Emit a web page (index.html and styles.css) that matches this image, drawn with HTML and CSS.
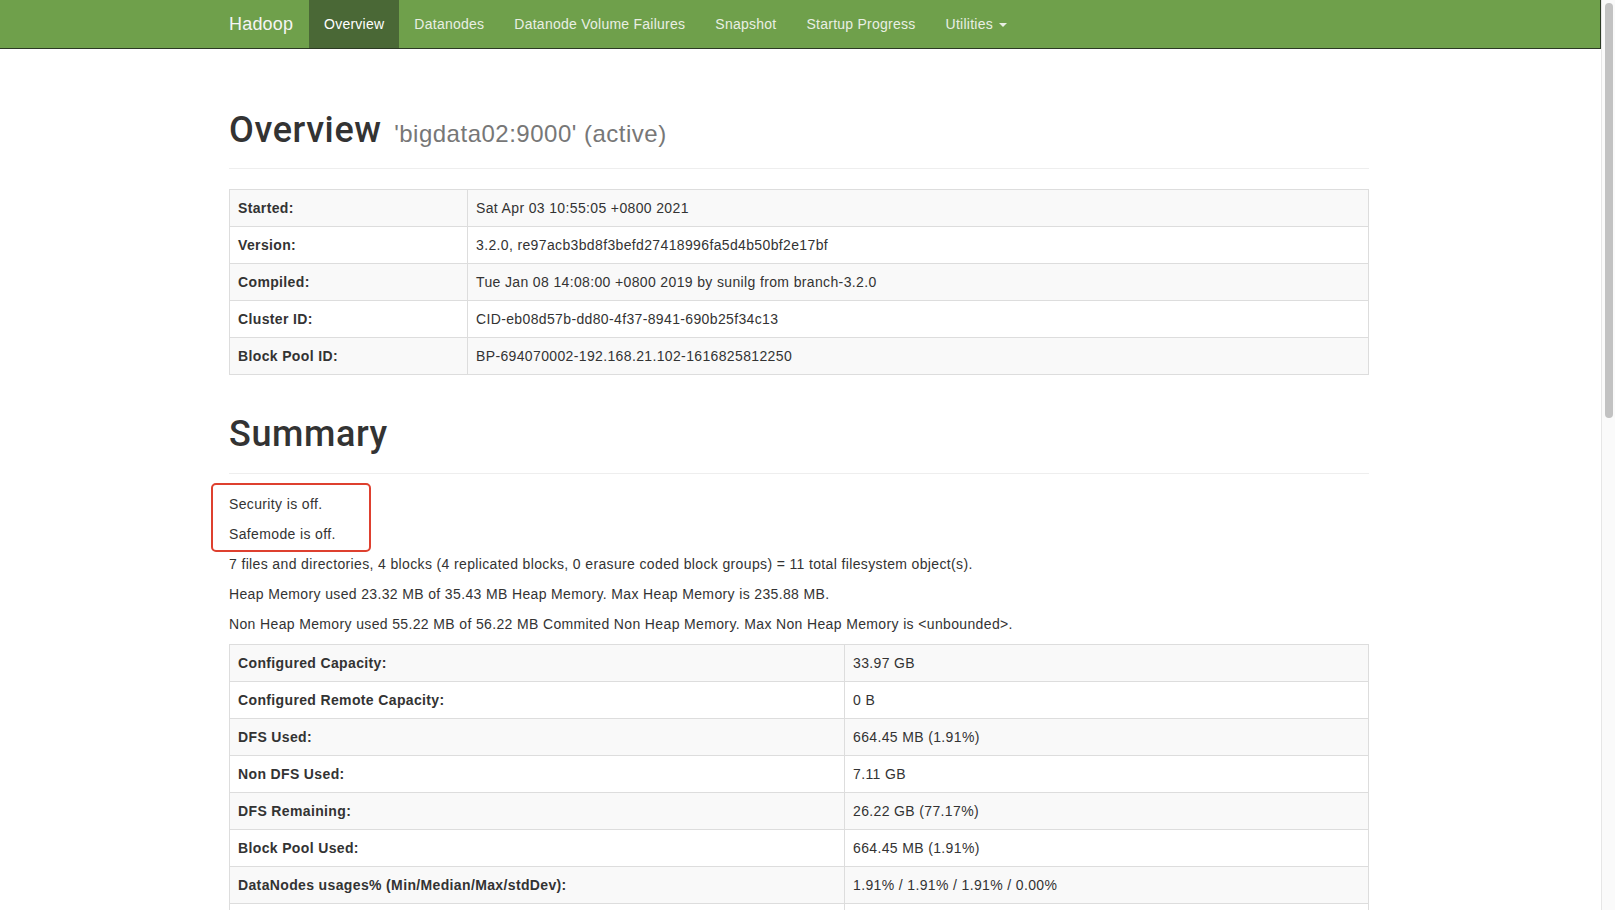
FILE: index.html
```html
<!DOCTYPE html>
<html lang="en">
<head>
<meta charset="utf-8">
<title>Namenode information</title>
<link rel="stylesheet" href="styles.css">
</head>
<body>
<div class="app">
  <div class="page">
    <nav class="navbar">
      <div class="nav-inner">
        <a class="brand" href="#">Hadoop</a>
        <ul class="nav">
          <li class="active"><a href="#">Overview</a></li>
          <li><a href="#">Datanodes</a></li>
          <li><a href="#">Datanode Volume Failures</a></li>
          <li><a href="#">Snapshot</a></li>
          <li><a href="#">Startup Progress</a></li>
          <li><a href="#">Utilities <span class="caret"></span></a></li>
        </ul>
      </div>
    </nav>

    <div class="container">
      <div class="page-header">
        <h1>Overview <small>'bigdata02:9000' (active)</small></h1>
      </div>
      <table class="table t1">
        <colgroup><col class="c1"><col></colgroup>
        <tbody>
          <tr><th>Started:</th><td>Sat Apr 03 10:55:05 +0800 2021</td></tr>
          <tr><th>Version:</th><td>3.2.0, re97acb3bd8f3befd27418996fa5d4b50bf2e17bf</td></tr>
          <tr><th>Compiled:</th><td>Tue Jan 08 14:08:00 +0800 2019 by sunilg from branch-3.2.0</td></tr>
          <tr><th>Cluster ID:</th><td>CID-eb08d57b-dd80-4f37-8941-690b25f34c13</td></tr>
          <tr><th>Block Pool ID:</th><td>BP-694070002-192.168.21.102-1616825812250</td></tr>
        </tbody>
      </table>

      <div class="page-header">
        <h1>Summary</h1>
      </div>
      <div class="notes">
        <p>Security is off.</p>
        <p>Safemode is off.</p>
        <div class="highlight"></div>
      </div>
      <p>7 files and directories, 4 blocks (4 replicated blocks, 0 erasure coded block groups) = 11 total filesystem object(s).</p>
      <p>Heap Memory used 23.32 MB of 35.43 MB Heap Memory. Max Heap Memory is 235.88 MB.</p>
      <p>Non Heap Memory used 55.22 MB of 56.22 MB Commited Non Heap Memory. Max Non Heap Memory is &lt;unbounded&gt;.</p>
      <table class="table t2">
        <colgroup><col class="c2"><col></colgroup>
        <tbody>
          <tr><th>Configured Capacity:</th><td>33.97 GB</td></tr>
          <tr><th>Configured Remote Capacity:</th><td>0 B</td></tr>
          <tr><th>DFS Used:</th><td>664.45 MB (1.91%)</td></tr>
          <tr><th>Non DFS Used:</th><td>7.11 GB</td></tr>
          <tr><th>DFS Remaining:</th><td>26.22 GB (77.17%)</td></tr>
          <tr><th>Block Pool Used:</th><td>664.45 MB (1.91%)</td></tr>
          <tr><th>DataNodes usages% (Min/Median/Max/stdDev):</th><td>1.91% / 1.91% / 1.91% / 0.00%</td></tr>
          <tr><th>Live Nodes</th><td>1 (Decommissioned: 0, In Maintenance: 0)</td></tr>
          <tr><th>Dead Nodes</th><td>0 (Decommissioned: 0, In Maintenance: 0)</td></tr>
        </tbody>
      </table>
    </div>
  </div>
  <div class="scrollbar"><div class="thumb"></div></div>
</div>
</body>
</html>
```

FILE: styles.css
```css
html, body {
  margin: 0;
  padding: 0;
  height: 100%;
  overflow: hidden;
  background: #fff;
}

body {
  font-family: "Liberation Sans", Arial, Helvetica, sans-serif;
  font-size: 14px;
  line-height: 20px;
  color: #333;
  letter-spacing: 0.36px;
}

.app {
  display: flex;
  height: 910px;
}

.page {
  flex: 1;
  min-width: 0;
  overflow: hidden;
}

/* navbar */
.navbar {
  height: 48px;
  background: #6fa04b;
  border-bottom: 1px solid #2c3a24;
  border-right: 1px solid #2c3a24;
}

.nav-inner {
  display: flex;
  height: 48px;
  margin-left: 214px;
}

.brand {
  display: flex;
  align-items: center;
  width: 95px;
  box-sizing: border-box;
  padding-left: 15px;
  font-size: 18px;
  color: #f4f4f4;
  text-decoration: none;
  letter-spacing: 0.2px;
}

.nav {
  display: flex;
  list-style: none;
  margin: 0;
  padding: 0;
}

.nav li a {
  display: flex;
  align-items: center;
  height: 48px;
  padding: 0 15px;
  color: #e9efe4;
  text-decoration: none;
  letter-spacing: 0.25px;
}

.nav li.active a {
  background: #4a6836;
  color: #fff;
}

.caret {
  display: inline-block;
  width: 0;
  height: 0;
  margin-left: 6px;
  margin-top: 2px;
  border-top: 4px solid #e9efe4;
  border-left: 4px solid transparent;
  border-right: 4px solid transparent;
}

/* content */
.container {
  width: 1140px;
  margin-left: 214px;
  padding: 20px 15px 0;
}

.page-header {
  margin: 40px 0 20px;
  padding-bottom: 9px;
  border-bottom: 1px solid #eee;
}

.page-header h1 {
  margin: 0 0 10px;
  font-family: Roboto, "Liberation Sans", Arial, sans-serif;
  font-weight: 500;
  font-size: 36px;
  line-height: 39.6px;
  letter-spacing: 0.6px;
  color: #333;
}

.container > .page-header:first-child h1 {
  padding-top: 2px;
  margin-bottom: 8px;
}

.page-header h1 small {
  font-family: "Liberation Sans", Arial, sans-serif;
  font-weight: normal;
  font-size: 24px;
  line-height: 1;
  letter-spacing: 0.5px;
  color: #777;
  margin-left: 3px;
}

p {
  margin: 0 0 10px;
}

.notes {
  position: relative;
}

.highlight {
  position: absolute;
  left: -18px;
  top: -11px;
  width: 160px;
  height: 69px;
  box-sizing: border-box;
  border: 2px solid #de402f;
  border-radius: 5px;
}

.table {
  width: 100%;
  table-layout: fixed;
  border-collapse: collapse;
  border-spacing: 0;
  border: 1px solid #ddd;
  margin-bottom: 20px;
}

.table th,
.table td {
  padding: 8px;
  line-height: 20px;
  text-align: left;
  vertical-align: top;
  border: 1px solid #ddd;
  white-space: nowrap;
}

.table th {
  font-weight: bold;
}

.table tbody tr:nth-child(odd) {
  background: #f9f9f9;
}

.t1 .c1 { width: 238px; }
.t2 .c2 { width: 615px; }

/* scrollbar */
.scrollbar {
  flex: none;
  width: 14px;
  box-sizing: border-box;
  background: #fafafa;
  border-left: 1px solid #e6e6e6;
  padding: 3px 2px 0 3px;
}

.thumb {
  width: 8px;
  height: 415px;
  border-radius: 4px;
  background: #c2c2c2;
}
```
